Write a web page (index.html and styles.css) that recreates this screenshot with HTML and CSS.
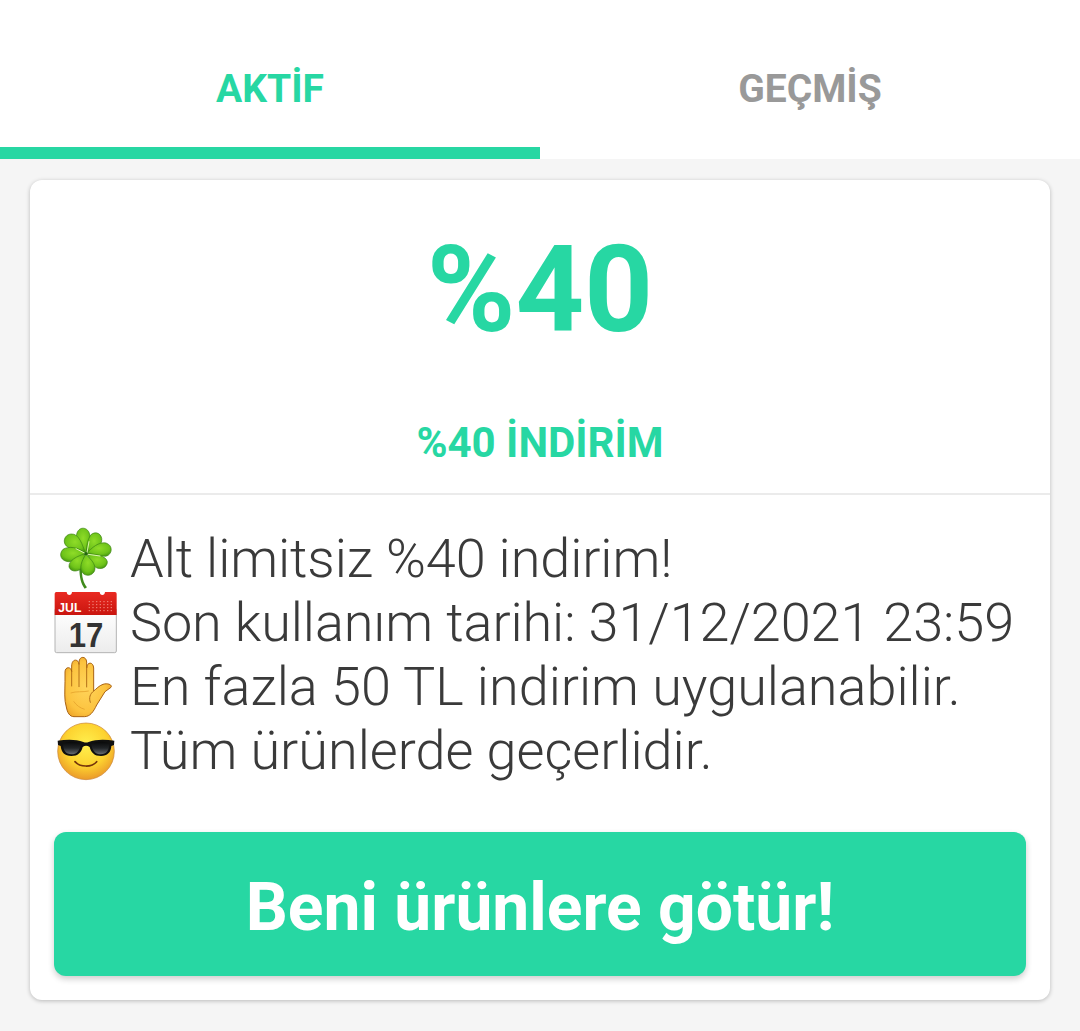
FILE: index.html
```html
<!DOCTYPE html>
<html lang="tr">
<head>
<meta charset="utf-8">
<title>İndirimler</title>
<link rel="stylesheet" href="styles.css">
</head>
<body>
<nav class="tabs">
  <a class="tab tab-active">AKTİF</a>
  <a class="tab">GEÇMİŞ</a>
</nav>
<main class="card">
  <header class="card-head">
    <h1 class="amount">%40</h1>
    <h2 class="caption">%40 İNDİRİM</h2>
  </header>
  <ul class="details">
    <li class="detail detail-tight">
      <svg class="icon" viewBox="24 21 192 192">
        <defs>
          <radialGradient id="leaf" cx=".5" cy=".4" r=".65"><stop offset="0" stop-color="#8fdc28"/><stop offset=".65" stop-color="#6fc41a"/><stop offset="1" stop-color="#45960f"/></radialGradient>
        </defs>
        <path d="M100 142C100 172 105 192 116 206L123 202C112 188 107 170 108 145Z" fill="#3f8a1c"/>
        <g fill="url(#leaf)" stroke="#3b8313" stroke-width="2">
          <path d="M121 101C104 86 88 71 91 49C93 20 120 18 129 37C138 59 126 80 121 101Z"/>
          <path d="M119 101C99 84 88 87 69 83C46 73 53 43 76 42C99 40 110 76 119 101Z"/>
          <path d="M121 100C121 77 125 56 136 43C157 29 174 51 165 70C154 87 135 89 121 100Z"/>
          <path d="M122 101C137 83 158 65 180 69C202 76 200 104 179 109C160 109 140 101 122 101Z"/>
          <path d="M118 100C96 80 67 78 51 88C36 104 46 124 68 125C91 124 101 108 118 100Z"/>
          <path d="M118 101C94 108 67 121 69 141C75 158 98 155 107 144C115 130 112 116 118 101Z"/>
          <path d="M123 103C148 100 180 107 184 125C184 145 161 150 149 142C136 134 133 116 123 103Z"/>
          <path d="M120 103C107 121 97 147 111 160C124 173 148 163 147 144C145 125 130 115 120 103Z"/>
        </g>
        <path d="M119 101L90 86M123 98L129 65M126 103L162 108" stroke="#dcf4b2" stroke-width="3" stroke-linecap="round"/>
        <circle cx="120" cy="101" r="5" fill="#246611"/>
      </svg>
      <span>Alt limitsiz %40 indirim!</span>
    </li>
    <li class="detail detail-tight">
      <svg class="icon" viewBox="24 15 192 192">
        <defs>
          <linearGradient id="page" x2="0" y2="1"><stop offset="0" stop-color="#fff"/><stop offset="1" stop-color="#ececec"/></linearGradient>
          <linearGradient id="red" x2="0" y2="1"><stop offset="0" stop-color="#e92a22"/><stop offset="1" stop-color="#c9150e"/></linearGradient>
        </defs>
        <path d="M27 70H211V195Q211 200 206 200H32Q27 200 27 195Z" fill="url(#page)" stroke="#b4b4b4" stroke-width="3"/>
        <path d="M26 87V23Q26 18 31 18H62Q63 27 70 27Q77 27 78 18H161Q162 27 169 27Q176 27 177 18H207Q212 18 212 23V87Z" fill="url(#red)"/>
        <path d="M128 47H204M128 56H204M128 65H204M128 74H204" stroke="#f28b7f" stroke-width="3" stroke-dasharray="4 7"/>
        <text class="cal-month" x="37" y="78" textLength="69" lengthAdjust="spacingAndGlyphs">JUL</text>
        <text class="cal-day" x="68" y="183" textLength="104" lengthAdjust="spacingAndGlyphs">17</text>
      </svg>
      <span>Son kullanım tarihi: 31/12/2021 23:59</span>
    </li>
    <li class="detail">
      <svg class="icon" viewBox="24 15 192 192">
        <defs>
          <radialGradient id="skin" cx=".45" cy=".5" r=".65"><stop offset="0" stop-color="#ffd45a"/><stop offset=".65" stop-color="#fcc33f"/><stop offset="1" stop-color="#e99b22"/></radialGradient>
        </defs>
        <path d="M61 171C54 151 57 120 57 94V66C57 49 76 49 77 65V48C77 25 98 26 99 43V36C100 17 121 18 122 36V54C123 34 142 35 143 54V123C151 117 159 107 171 103C187 98 200 106 195 112L177 125L152 165C142 186 132 200 115 200H84C71 200 64 188 61 171Z" fill="url(#skin)" stroke="#a96314" stroke-width="3" stroke-linejoin="round"/>
        <path d="M77 64V108M99 43V110M122 50V111M143 123C132 131 128 144 133 157" fill="none" stroke="#b47018" stroke-width="3" stroke-linecap="round"/>
        <path d="M74 129C91 123 110 127 128 123M83 154C91 166 102 174 116 178" fill="none" stroke="#e6a32d" stroke-width="2.5"/>
      </svg>
      <span>En fazla 50 TL indirim uygulanabilir.</span>
    </li>
    <li class="detail">
      <svg class="icon" viewBox="24 15 192 192">
        <defs>
          <radialGradient id="face" cx=".5" cy=".38" r=".64"><stop offset="0" stop-color="#fff04e"/><stop offset=".6" stop-color="#fdd22f"/><stop offset="1" stop-color="#e9952a"/></radialGradient>
          <linearGradient id="lens" x2="0" y2="1"><stop offset="0" stop-color="#090909"/><stop offset=".5" stop-color="#202326"/><stop offset="1" stop-color="#686d72"/></linearGradient>
        </defs>
        <circle cx="120" cy="112" r="85" fill="url(#face)" stroke="#c98436" stroke-width="2"/>
        <path d="M35 80C60 76 91 75 112 84Q120 87 128 84C149 75 180 76 205 80L204 93L196 96C195 115 184 126 165 126C145 126 135 116 131 99Q120 91 110 99C106 116 96 126 76 126C56 126 46 116 44 96L36 93Z" fill="#101010"/>
        <path d="M51 88C69 81 90 82 104 90C102 111 92 121 76 121C60 121 51 110 51 88ZM136 90C150 82 171 81 190 88C190 110 181 121 165 121C149 121 138 111 136 90Z" fill="url(#lens)"/>
        <path d="M87 143C102 160 137 161 152 143" fill="none" stroke="#77350c" stroke-width="5" stroke-linecap="round"/>
      </svg>
      <span>Tüm ürünlerde geçerlidir.</span>
    </li>
  </ul>
  <button class="cta">Beni ürünlere götür!</button>
</main>
</body>
</html>
```
FILE: styles.css
```css
* { box-sizing: border-box; }

body {
  margin: 0;
  min-height: 1031px;
  background: #f5f5f5;
  font-family: Roboto, "Noto Sans", sans-serif;
}

.tabs {
  display: flex;
  height: 159px;
  background: #fff;
}

.tab {
  flex: 1;
  padding-top: 31px;
  border-bottom: 12px solid transparent;
  color: #999;
  font-size: 39px;
  font-weight: 700;
  line-height: 116px;
  text-align: center;
}

.tab-active {
  border-bottom-color: #27d7a3;
  color: #27d7a3;
}

.card {
  height: 820px;
  margin: 21px 30px 0;
  border-radius: 12px;
  background: #fff;
  box-shadow: 0 1px 4px rgba(0, 0, 0, .25);
}

.card-head {
  height: 315px;
  padding-top: 40px;
  border-bottom: 2px solid #ebebeb;
  color: #27d7a3;
  text-align: center;
}

.amount {
  margin: 0;
  font-size: 120px;
  line-height: 141px;
}

.caption {
  margin: 57px 0 0;
  font-size: 42px;
  line-height: 50px;
}

.details {
  margin: 0;
  padding: 32px 24px 0;
  list-style: none;
}

.detail {
  display: flex;
  gap: 12px;
  height: 64px;
  color: #3a3a3a;
  font-size: 54px;
  font-weight: 300;
  line-height: 64px;
  white-space: nowrap;
}

.detail-tight {
  letter-spacing: -.08px;
}

.icon {
  flex: none;
  width: 64px;
  height: 64px;
  letter-spacing: 0;
}

.cal-month {
  fill: #fff;
  font: bold 38px "Liberation Sans", sans-serif;
}

.cal-day {
  fill: #333;
  font: bold 106px "Liberation Sans", sans-serif;
}

.cta {
  display: block;
  width: 972px;
  height: 144px;
  margin: 49px 24px 0;
  padding: 6px 0 0;
  border: 0;
  border-radius: 12px;
  background: #27d7a3;
  box-shadow: 0 3px 6px rgba(0, 0, 0, .2);
  color: #fff;
  font: 700 66px Roboto, "Noto Sans", sans-serif;
}
```
